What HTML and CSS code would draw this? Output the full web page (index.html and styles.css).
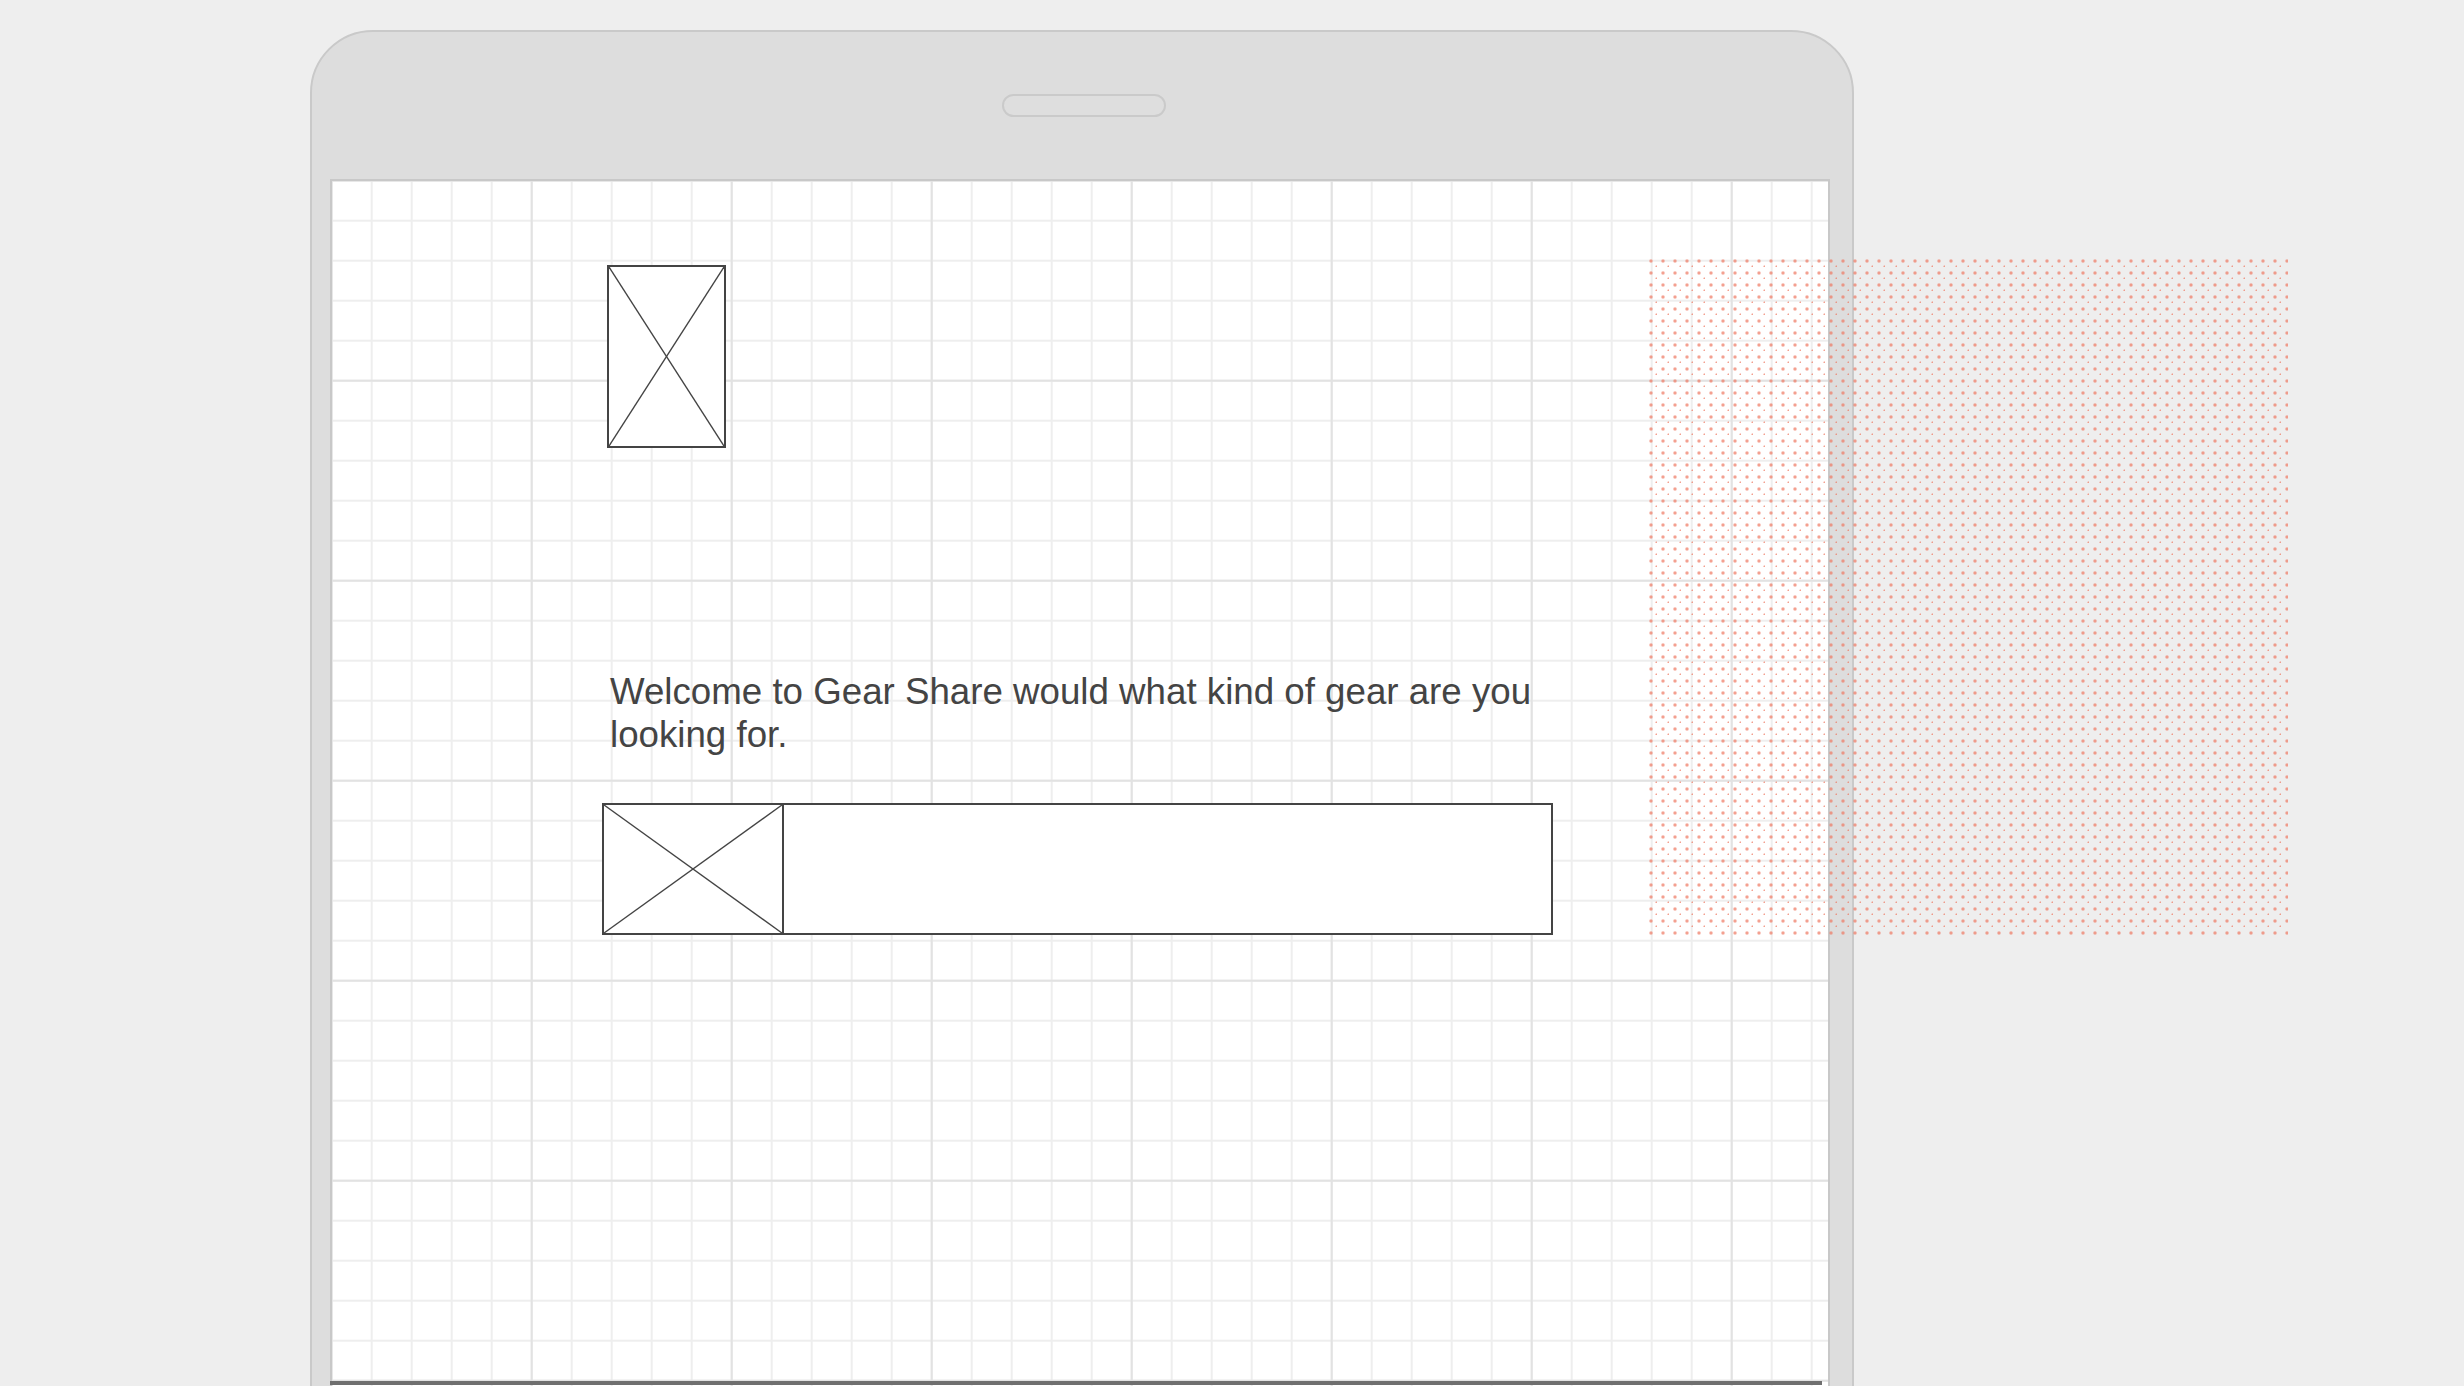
FILE: index.html
```html
<!DOCTYPE html>
<html lang="en">
<head>
<meta charset="utf-8">
<title>Gear Share wireframe</title>
<link rel="stylesheet" href="styles.css">
</head>
<body>
<div class="device">
  <div class="speaker"></div>
  <div class="screen">
    <div class="placeholder logo">
      <svg class="cross" viewBox="0 0 100 100" preserveAspectRatio="none"><line x1="0" y1="0" x2="100" y2="100"/><line x1="100" y1="0" x2="0" y2="100"/></svg>
    </div>
    <p class="welcome">Welcome to Gear Share would what kind of gear are you looking for.</p>
    <div class="search">
      <div class="placeholder search-img">
        <svg class="cross" viewBox="0 0 100 100" preserveAspectRatio="none"><line x1="0" y1="0" x2="100" y2="100"/><line x1="100" y1="0" x2="0" y2="100"/></svg>
      </div>
      <div class="search-field"></div>
    </div>
    <div class="bottom-bar"></div>
  </div>
</div>
<div class="dots"></div>
</body>
</html>
```
FILE: styles.css
```css
html, body {
  margin: 0;
  padding: 0;
  height: 100%;
  overflow: hidden;
}
body {
  background: #eeeeee;
  font-family: "Liberation Sans", Arial, sans-serif;
  position: relative;
}
.device {
  box-sizing: border-box;
  width: 1544px;
  height: 1500px;
  margin: 30px 0 0 310px;
  background: #dddddd;
  border: 2px solid #c9c9c9;
  border-radius: 63px 63px 0 0;
  padding: 62px 0 0 18px;
  display: flex;
  flex-direction: column;
}
.speaker {
  box-sizing: border-box;
  width: 164px;
  height: 24px;
  margin-left: 672px;
  border: 2px solid #cacaca;
  border-radius: 12px;
  background: #dedede;
}
.screen {
  box-sizing: border-box;
  width: 1500px;
  height: 1400px;
  margin-top: 62px;
  border: 2px solid #c8c8c8;
  border-bottom: none;
  background-color: #ffffff;
  background-image:
    linear-gradient(to right, transparent 198px, #e2e2e2 198px, #e2e2e2 200px),
    linear-gradient(to bottom, transparent 198px, #e2e2e2 198px, #e2e2e2 200px),
    linear-gradient(to right, transparent 38px, #eeeeee 38px, #eeeeee 40px),
    linear-gradient(to bottom, transparent 38px, #eeeeee 38px, #eeeeee 40px);
  background-size: 200px 200px, 200px 200px, 40px 40px, 40px 40px;
  background-position: 0.7px 0.7px;
  background-origin: padding-box;
  padding: 84px 0 0 270px;
  display: flex;
  flex-direction: column;
  align-items: flex-start;
}
.placeholder {
  box-sizing: border-box;
  position: relative;
  background: #ffffff;
}
.cross {
  display: block;
  width: 100%;
  height: 100%;
}
.cross line {
  stroke: #444444;
  stroke-width: 1.4;
  vector-effect: non-scaling-stroke;
}
.logo {
  width: 119px;
  height: 183px;
  margin-left: 5px;
  border: 2px solid #444444;
}
.welcome {
  margin: 222px 0 0 8px;
  width: 940px;
  font-size: 36.7px;
  line-height: 43px;
  color: #444444;
}
.search {
  box-sizing: border-box;
  width: 951px;
  height: 132px;
  margin-top: 47px;
  border: 2px solid #444444;
  background: #ffffff;
  display: flex;
}
.search-img {
  width: 180px;
  height: 100%;
  border-right: 2px solid #444444;
}
.search-field {
  flex: 1;
}
.bottom-bar {
  width: 1492px;
  height: 4px;
  margin: 446px 0 0 -272px;
  background: #6f6f6f;
}
.dots {
  position: absolute;
  left: 1645px;
  top: 255px;
  width: 643px;
  height: 682px;
  background-image:
    radial-gradient(circle at 6px 6px, rgba(238, 118, 95, 0.8) 0, rgba(238, 118, 95, 0.65) 1px, rgba(238, 118, 95, 0.25) 1.8px, transparent 2.3px),
    radial-gradient(circle at 12px 12px, rgba(238, 118, 95, 0.8) 0, rgba(238, 118, 95, 0.65) 1px, rgba(238, 118, 95, 0.25) 1.8px, transparent 2.3px);
  background-size: 12px 12px, 12px 12px;
  background-position: 0 0, 0 0;
}
```
